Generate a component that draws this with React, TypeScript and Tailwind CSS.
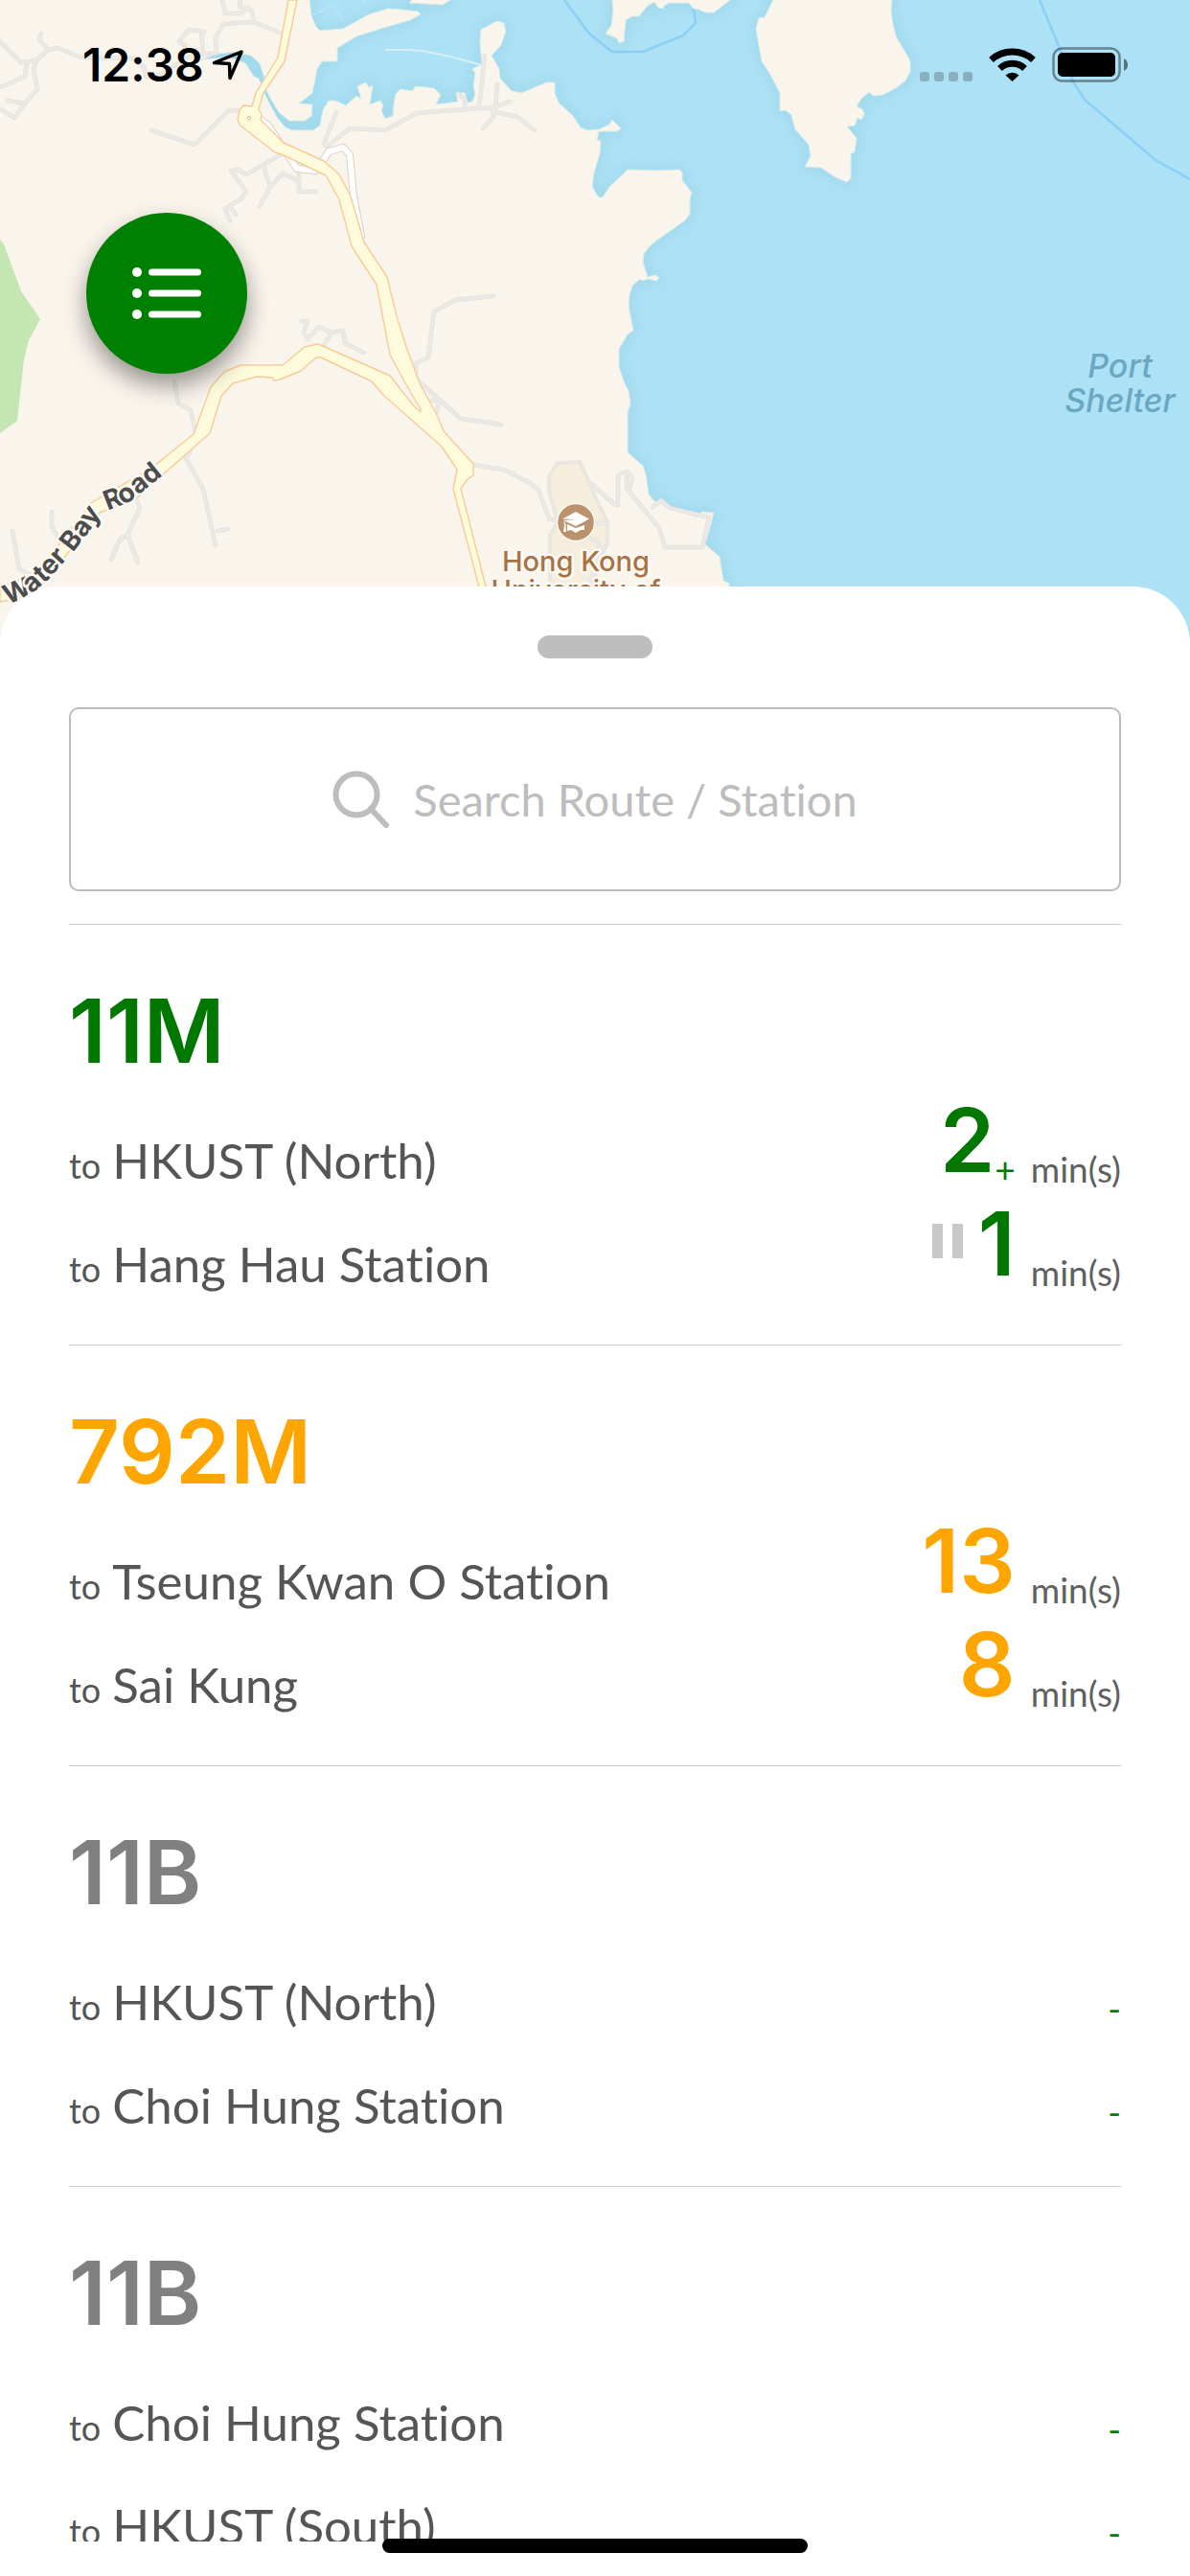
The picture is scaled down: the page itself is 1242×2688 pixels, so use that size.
const lato = "font-['Lato','Liberation_Sans',sans-serif] [font-variant-ligatures:none]";
const inter = "font-['Inter','Liberation_Sans',sans-serif]";

const routes = [
  {
    id: 1,
    name: "11M",
    color: "text-[#007800]",
    stops: [
      { to: "HKUST (North)", min: "2", plus: true },
      { to: "Hang Hau Station", min: "1", paused: true },
    ],
  },
  {
    id: 2,
    name: "792M",
    color: "text-[#ffa500]",
    stops: [
      { to: "Tseung Kwan O Station", min: "13" },
      { to: "Sai Kung", min: "8" },
    ],
  },
  {
    id: 3,
    name: "11B",
    color: "text-[#808080]",
    stops: [{ to: "HKUST (North)" }, { to: "Choi Hung Station" }],
  },
  {
    id: 4,
    name: "11B",
    color: "text-[#808080]",
    stops: [{ to: "Choi Hung Station" }, { to: "HKUST (South)" }],
  },
];

const land = [
  "M-20 -20H323V0L325 17 330 28 334 32 358 30 385 15 405 9 420 10 436 12 439 15 428 21 400 29 372 38 352 50 352 64 336 64 331 72 326 97 312 108 326 109 325 121 318 126 302 126 291 117 283 104 278 94 275 78 271 66 262 58 245 54 228 56 210 62 240 60 256 66 265 80 270 82 275 95 281 108 290 124 298 133 306 136 327 136 334 131 337 115 343 105 350 105 361 110 372 100 377 103 373 90 382 86 385 91 389 89 386 109 397 105 400 110 398 115 402 124 410 121 411 108 413 98 418 93 431 95 433 90 453 92 460 99 455 109 478 106 476 97 485 97 488 107 493 106 496 98 494 90 496 76 493 72 503 67 501 45 502 31 519 22 526 24 528 32 523 47 513 58 521 72 522 82 534 95 545 97 570 86 579 86 579 97 583 107 598 121 606 133 613 136 625 135 636 130 639 125 648 134 644 137 625 137 623 146 627 147 626 160 620 180 618 195 625 206 629 206 636 195 655 177 683 178 709 177 712 180 712 188 722 201 720 207 720 223 715 230 685 251 677 258 672 265 671 274 676 289 684 287 688 290 685 293 677 291 670 293 668 291 660 298 657 308 656 320 661 345 655 349 646 364 646 383 651 398 656 408 658 422 655 430 655 472 671 486 674 495 677 516 684 524 692 522 700 530 731 537 732 534 745 535 736 568 751 581 755 606 761 609V690H-20Z",
  "M427 3L462 5 470 0V-20H430V0Z",
  "M639 -20V0L640 10 638 27 632 35 644 40 646 45 651 43 653 21 660 17 667 17 676 6 683 2 687 8 692 9 693 6 698 3H719L724 9 730 10 736 13H745L762 0V-20Z",
  "M807 -20V0L798 18 792 19 789 30 795 64 803 76 814 97V116L820 115 826 120 830 135 844 151 846 163 840 174 857 175 872 185 884 190 888 186V161L892 158 894 144 884 132 892 131 895 123 899 125 902 119 900 114 894 111 899 103 907 96 912 100 921 99 935 92 945 84 950 75V65L947 58 935 38 931 20 930 10 931 0V-20Z",
];

const lanes = [
  "M0 43L22 65 38 63 50 52 60 50 85 60 140 61 150 70 153 80",
  "M50 52L41 41 43 35",
  "M28 65L26 80 0 91",
  "M38 63L35 72 39 93 26 108 15 123 0 114M26 108L8 105",
  "M232 0L235 14H251L259 8 263 12 265 23 233 25 225 40 226 55",
  "M251 0L250 7 259 8M265 23L294 35",
  "M213 33L197 31 187 43 194 48M210 33L212 57M153 80L168 78 195 60 226 55",
  "M158 136L203 151 239 115 252 116",
  "M292 162L257 182 248 177 241 178 257 200 252 207 235 218 240 230M240 215L246 224",
  "M275 173L282 195 271 215M282 195L295 181 312 189M312 180V200H330",
  "M351 117L338 150 341 153 365 134 402 136 435 118 500 113 517 112 519 88",
  "M506 58L500 112M485 114V104L478 98M514 112L532 106M514 116L540 122 558 136M514 112L515 122 504 134",
  "M515 309L475 313 453 325 447 373 434 379V395L481 437 523 443M450 418H458L456 430",
  "M182 398L186 421 199 428 204 450M199 470L194 478 212 510 225 569M227 554L238 552",
  "M143 523L146 530 133 558 144 587M133 558L125 563 116 584",
  "M54 534V549L64 568M13 554L20 594 35 602",
  "M315 335L321 335 317 347 321 354 333 341 346 347 358 345 360 358 380 368M346 347L338 360",
  "M494 485L526 490 553 504 562 511 573 541 580 543",
  "M615 503L642 527H645V496L654 492 660 499 656 512 688 551 694 571H733L740 540 699 530 690 522 681 529",
  "M614 546H634M613 560L624 565 627 580 614 612",
  "M654 498V510",
];

const highway =
  "M301 0L290 60 267 97 263 111 254 110 250 115 248 125 251 131 287 159 296 162 340 183 354 208 367 257 393 297 407 370 422 398 439 427V430L432 424 407 392 332 359 318 362 295 381H251L234 388 220 404 202 453 160 487 95 525 60 570 40 596 0 614V628L20 624 50 605 70 578 104 535 145 518 168 497 219 452 231 413 243 400 268 393 285 394 286 397 292 396 314 387 330 373H335L388 398 400 412 461 466 477 490 473 510 502 620H509L481 510 488 500 494 496V484L463 450 457 435 438 400 424 362 414 330 404 289 380 253 366 205 354 182 338 168 296 149 272 125 273 120 270 114 275 97 297 64 310 0Z";

function MapView() {
  return (
    <svg
      aria-label="Map of Port Shelter"
      viewBox="0 0 1242 672"
      preserveAspectRatio="xMidYMid slice"
      className={`absolute inset-0 h-full w-full ${inter}`}
    >
      <defs>
        <filter id="shore" x="-5%" y="-5%" width="110%" height="110%">
          <feGaussianBlur stdDeviation="7" />
        </filter>
        <path id="bayRoad" d="M8 631L32 621 50 605 78 574 98 548Q104 536 112 533L135 524 185 484" />
      </defs>
      <rect width="1242" height="672" fill="#ade1f6" />
      <g fill="#9bd6e6" stroke="#9bd6e6" strokeWidth="8" filter="url(#shore)" opacity="0.7">
        {land.map((d) => (
          <path key={d} d={d} />
        ))}
      </g>
      <g fill="none" stroke="#8bcef6" strokeWidth="2.5">
        <path d="M589 0L615 35 639 54H671L713 37 726 24 724 9" />
        <path d="M1085 0L1105 48 1120 85 1132 104 1206 167 1242 187" />
      </g>
      <g fill="#f9f4ec" stroke="#dcedea" strokeWidth="1">
        {land.map((d) => (
          <path key={d} d={d} />
        ))}
      </g>
      <path d="M402 52H425L440 53 470 59 503 68" fill="none" stroke="#d6eef5" strokeWidth="2" />
      <path d="M326 16L347 5 357 20M379 0L383 6" fill="none" stroke="#c6e9f5" strokeWidth="1" />
      <path d="M0 250L4 255 22 304 42 333 30 355 25 375 18 439 0 452Z" fill="#c3e6b2" />
      <path
        d="M573 512V497L582 483 605 482 615 503 621 518 634 545V567L625 585 617 620H574V558L582 545Z"
        fill="#f6eedd"
        stroke="#e9e6e0"
        strokeWidth="4"
      />
      <g fill="none" strokeLinecap="round" strokeLinejoin="round">
        <g stroke="#e3e1dd" strokeWidth="4.5">
          {lanes.map((d) => (
            <path key={d} d={d} />
          ))}
        </g>
        <g stroke="#ebe9e6" strokeWidth="3">
          {lanes.map((d) => (
            <path key={d} d={d} />
          ))}
        </g>
        <path d="M272 125L280 131 310 176 329 178M335 171L343 158 358 154 365 161 369 205 377 246" stroke="#d9d0c6" strokeWidth="8" />
        <path d="M272 125L280 131 310 176 329 178M335 171L343 158 358 154 365 161 369 205 377 246" stroke="#fff" strokeWidth="6" />
      </g>
      <path d={highway} fill="#fdfbdb" stroke="#f7cb98" strokeWidth="1.4" strokeLinejoin="round" />
      <circle cx="260" cy="123" r="1.6" fill="#fdf3d0" stroke="#eeb98a" />

      <g paintOrder="stroke" stroke="#fcf9f4" strokeWidth="5" strokeLinejoin="round">
        <text fill="#4c4c4c" className="text-[28px] font-bold">
          <textPath href="#bayRoad">Water Bay Road</textPath>
        </text>
        <g fill="#a87344" textAnchor="middle" className="text-[29px] font-medium">
          <text x="601" y="596">Hong Kong</text>
          <text x="601" y="626">University of</text>
        </g>
      </g>
      <g fill="#6aa8c0" textAnchor="middle" className="text-[34px] font-medium italic">
        <text x="1169" y="394">Port</text>
        <text x="1169" y="430">Shelter</text>
      </g>

      <circle cx="601" cy="545" r="19.5" fill="#ba926d" stroke="#fcf9f4" strokeWidth="1.5" />
      <g fill="#fff">
        <path d="M601 534L615 541.5 601 549 588 543 601 542 587 541.5Z" />
        <path d="M592 547L601 551 610 548V553L606 553 601 556 596 553 592 554Z" />
        <path d="M588.500 543L590.500 547 591 555H588L589 548Z" />
      </g>
    </svg>
  );
}

function StatusBar() {
  return (
    <div className="relative flex items-start justify-between pt-[45px] pr-16 pl-[86px]">
      <div className="flex items-center gap-2">
        <span className={`text-[48px] leading-[46px] font-semibold text-black ${inter}`}>12:38</span>
        <svg viewBox="0 0 34 34" className="h-[34px] w-[34px]" fill="none" stroke="#000" strokeWidth="3.5" strokeLinejoin="round">
          <path d="M31 3L2.500 14.500 18.500 15.500 19 30.500Z" />
        </svg>
      </div>
      <svg viewBox="0 0 218 46" className="h-[46px] w-[218px]">
        <g fill="#000" fillOpacity="0.22">
          <rect x="0" y="30" width="10" height="10" rx="3" />
          <rect x="15" y="30" width="10" height="10" rx="3" />
          <rect x="30" y="30" width="10" height="10" rx="3" />
          <rect x="45" y="30" width="10" height="10" rx="3" />
        </g>
        <g fill="none" stroke="#000" strokeWidth="7">
          <path d="M74.500 17.500A33 33 0 0 1 118.500 17.500" />
          <path d="M83.500 26.500A19 19 0 0 1 109.500 26.500" />
        </g>
        <path d="M89.500 33.500A10.500 10.500 0 0 1 103.500 33.500L96.500 40Z" />
        <rect x="139.500" y="5.500" width="69" height="34" rx="9" fill="none" stroke="#000" strokeOpacity="0.42" strokeWidth="2.500" />
        <rect x="144" y="10" width="60" height="25" rx="5" />
        <path d="M213 16Q217 18 217 22.500T213 29Z" fillOpacity="0.5" />
      </svg>
    </div>
  );
}

function Eta({ stop }) {
  if (!stop.min) {
    return <div className="pb-2 text-[37px] leading-[48px] text-[#008000]">-</div>;
  }
  return (
    <div className="flex items-end">
      {stop.paused && (
        <span className="mr-4 mb-[45px] flex gap-[10px]">
          <span className="h-9 w-[11px] bg-[#c8c8c8]" />
          <span className="h-9 w-[11px] bg-[#c8c8c8]" />
        </span>
      )}
      <span className={`pb-[14px] text-[92px] leading-[92px] font-semibold ${inter}`}>{stop.min}</span>
      {stop.plus && <span className="pb-[6px] text-[37px] leading-[48px]">+</span>}
      <span className="ml-4 pb-[6px] text-[37px] leading-[48px] text-[#606060]">min(s)</span>
    </div>
  );
}

function RouteCard({ route }) {
  return (
    <li className="h-[439px] shrink-0 border-t border-[#cccccc] pt-[65px]">
      <h2 className={`text-[92px] leading-[92px] font-semibold ${inter} ${route.color}`}>{route.name}</h2>
      <ul className="pt-5">
        {route.stops.map((stop) => (
          <li key={stop.to} className="flex h-[108px] items-end justify-between">
            <div className="flex items-baseline gap-3 pb-[7px] text-[#555555]">
              <span className="text-[36px]">to</span>
              <span className="text-[51px] leading-[64px]">{stop.to}</span>
            </div>
            <div className={route.color}>
              <Eta stop={stop} />
            </div>
          </li>
        ))}
      </ul>
    </li>
  );
}

export default function App() {
  return (
    <div className={`relative flex h-screen flex-col overflow-hidden bg-white ${lato}`}>
      <header className="relative h-[672px] shrink-0">
        <MapView />
        <StatusBar />
        <button
          aria-label="Open list"
          className="relative mt-[131px] ml-[90px] flex h-[168px] w-[168px] items-center justify-center rounded-full bg-[#008000] shadow-[0_12px_24px_rgba(0,0,0,0.4)]"
        >
          <svg viewBox="0 0 72 54" className="h-[54px] w-[72px]" fill="#fff">
            <circle cx="5" cy="5" r="5" />
            <circle cx="5" cy="27" r="5" />
            <circle cx="5" cy="49" r="5" />
            <rect x="17" y="1.500" width="55" height="7" rx="3.500" />
            <rect x="17" y="23.500" width="55" height="7" rx="3.500" />
            <rect x="17" y="45.500" width="55" height="7" rx="3.500" />
          </svg>
        </button>
      </header>

      <main className="relative -mt-[60px] flex min-h-0 flex-1 flex-col rounded-t-[60px] bg-white px-[72px] pt-[51px] pb-9">
        <div className="h-6 w-[120px] shrink-0 self-center rounded-full bg-[#bebebe]" />
        <label className="mt-[51px] flex h-48 shrink-0 items-center justify-center gap-6 rounded-[10px] border-2 border-[#bbbbbb]">
          <svg viewBox="0 0 60 60" className="h-[60px] w-[60px]" fill="none" stroke="#bdbdbd">
            <circle cx="25" cy="25" r="21.500" strokeWidth="6" />
            <path d="M40 40L56 57" strokeWidth="6" strokeLinecap="round" />
          </svg>
          <input
            type="text"
            aria-label="Search route or station"
            placeholder="Search Route / Station"
            className="field-sizing-content text-[47px] leading-[60px] outline-none placeholder:text-[#bdbdbd]"
          />
        </label>
        <ul className="mt-[34px] flex min-h-0 flex-1 flex-col overflow-hidden">
          {routes.map((route) => (
            <RouteCard key={route.id} route={route} />
          ))}
        </ul>
      </main>

      <div className="absolute bottom-6 left-1/2 h-[15px] w-[444px] -translate-x-1/2 rounded-full bg-black" />
    </div>
  );
}
